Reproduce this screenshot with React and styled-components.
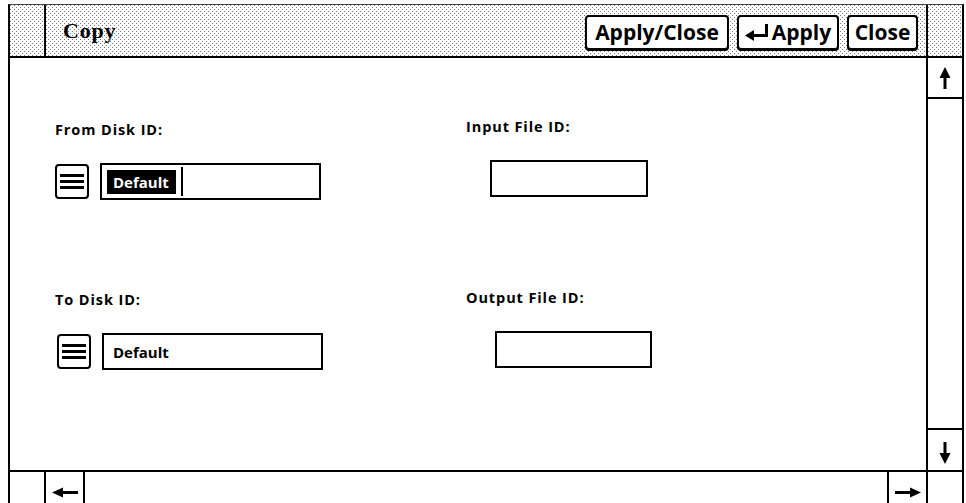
import React from 'react';
import styled, { createGlobalStyle } from 'styled-components';

const Global = createGlobalStyle`
  html, body { margin: 0; padding: 0; background: #fff; overflow: hidden; }
  body { font-family: "Open Sans", "Liberation Sans", sans-serif; color: #000; }
`;

const dots = `
  background-color: #fff;
  background-image:
    conic-gradient(from 270deg at 1px 1px, #7a7a7a 90deg, transparent 0),
    conic-gradient(from 270deg at 1px 1px, #7a7a7a 90deg, transparent 0);
  background-size: 4px 4px, 4px 4px;
  background-position: 0 0, 2px 2px;
`;

const Page = styled.div`
  width: 966px;
  height: 503px;
  padding: 4px 0 0 8px;
  box-sizing: border-box;
  overflow: hidden;
`;

const Window = styled.div`
  width: 956px;
  height: 510px;
  box-sizing: border-box;
  border-left: 2px solid #000;
  border-right: 2px solid #000;
  border-top: 1px solid #444;
  display: flex;
  flex-direction: column;
`;

const TitleBar = styled.div`
  height: 53px;
  flex-shrink: 0;
  box-sizing: border-box;
  border-bottom: 2px solid #000;
  display: flex;
  align-items: center;
  ${dots}
`;

const TitleCorner = styled.div`
  width: 36px;
  align-self: stretch;
  box-sizing: border-box;
  border-${p => p.$side}: 2px solid #000;
`;

const Title = styled.div`
  flex: 1;
  padding-left: 17px;
  margin-top: 1px;
  font-family: "Liberation Serif", "Times New Roman", serif;
  font-weight: 700;
  font-size: 22px;
  letter-spacing: 0.8px;
`;

const ButtonGroup = styled.div`
  display: flex;
  gap: 8px;
  margin: 4px 8px 0 0;
`;

const Button = styled.div`
  width: ${p => p.$w}px;
  height: 35px;
  box-sizing: border-box;
  border: 2px solid #000;
  border-radius: 4px;
  box-shadow: 0 1px 0 #000;
  background: #fff;
  display: flex;
  align-items: center;
  justify-content: center;
  gap: 3px;
  font-family: "Open Sans", "Liberation Sans", sans-serif;
  font-weight: 700;
  font-size: 21px;
  line-height: 1;
`;

const Main = styled.div`
  height: 414px;
  flex-shrink: 0;
  box-sizing: border-box;
  border-bottom: 2px solid #000;
  display: flex;
`;

const Content = styled.div`
  flex: 1;
`;

const VScroll = styled.div`
  width: 36px;
  box-sizing: border-box;
  border-left: 2px solid #000;
  display: flex;
  flex-direction: column;
  justify-content: space-between;
`;

const ScrollBox = styled.div`
  height: ${p => p.$h}px;
  box-sizing: border-box;
  border-${p => p.$edge}: 2px solid #000;
  display: flex;
  align-items: center;
  justify-content: center;
  padding-top: ${p => p.$pt || 0}px;
`;

const Bottom = styled.div`
  height: 40px;
  display: flex;
`;

const HCell = styled.div`
  width: ${p => p.$w}px;
  flex: ${p => (p.$grow ? 1 : 'none')};
  box-sizing: border-box;
  border-left: ${p => (p.$bl ? '2px solid #000' : 'none')};
  border-right: ${p => (p.$br ? '2px solid #000' : 'none')};
  display: flex;
  align-items: center;
  justify-content: center;
`;

const Form = styled.div`
  display: grid;
  grid-template-columns: 411px 1fr;
  grid-template-rows: 171px auto;
  padding: 59px 0 0 45px;
`;

const Group = styled.div`
  display: flex;
  flex-direction: column;
  align-items: flex-start;
  padding-top: ${p => p.$dy || 0}px;
`;

const Label = styled.div`
  font-family: "Open Sans", "Liberation Sans", sans-serif;
  font-weight: 700;
  font-size: 14.5px;
  letter-spacing: 0.9px;
  line-height: 19px;
`;

const FieldRow = styled.div`
  display: flex;
  align-items: center;
  gap: 11px;
  margin-top: 24px;
  margin-left: ${p => p.$dx || 0}px;
`;

const MenuButton = styled.div`
  width: 34px;
  height: 35px;
  box-sizing: border-box;
  border: 2px solid #000;
  border-radius: 4px;
  display: flex;
  flex-direction: column;
  align-items: center;
  justify-content: center;
  gap: 3px;
`;

const Bar = styled.div`
  width: 24px;
  height: 3px;
  background: #000;
`;

const TextBox = styled.div`
  width: ${p => p.$w}px;
  height: 37px;
  box-sizing: border-box;
  border: 2px solid #000;
  display: flex;
  align-items: center;
  padding-left: ${p => p.$pl || 0}px;
  font-family: "Open Sans", "Liberation Sans", sans-serif;
  font-weight: 700;
  font-size: 15px;
`;

const Selected = styled.span`
  background: #000;
  color: #fff;
  padding: 0 7px 0 6px;
  line-height: 24px;
`;

const Caret = styled.span`
  width: 2px;
  height: 29px;
  background: #000;
  margin-left: 5px;
`;

const ReturnIcon = () => (
  <svg width="24" height="17" viewBox="0 0 24 17">
    <polygon points="0,11.5 9,6 9,17" fill="#000" />
    <rect x="8" y="10" width="15" height="3" fill="#000" />
    <rect x="20" y="0" width="3" height="13" fill="#000" />
  </svg>
);

const ArrowV = ({ down }) => (
  <svg width="12" height="22" viewBox="0 0 12 22" style={down ? { transform: 'rotate(180deg)' } : undefined}>
    <polygon points="6,0 11.5,11 0.5,11" fill="#000" />
    <rect x="4.5" y="10" width="3" height="12" fill="#000" />
  </svg>
);

const ArrowH = ({ right }) => (
  <svg width="26" height="11" viewBox="0 0 26 11" style={right ? { transform: 'rotate(180deg)' } : undefined}>
    <polygon points="0,5.5 11,0.5 11,10.5" fill="#000" />
    <rect x="10" y="4" width="16" height="3" fill="#000" />
  </svg>
);

const Menu = () => (
  <MenuButton>
    <Bar />
    <Bar />
    <Bar />
  </MenuButton>
);

export default function App() {
  return (
    <>
      <Global />
      <Page>
        <Window>
          <TitleBar>
            <TitleCorner $side="right" />
            <Title>Copy</Title>
            <ButtonGroup>
              <Button $w={144}>Apply/Close</Button>
              <Button $w={102}>
                <ReturnIcon />
                Apply
              </Button>
              <Button $w={71}>Close</Button>
            </ButtonGroup>
            <TitleCorner $side="left" />
          </TitleBar>
          <Main>
            <Content>
              <Form>
                <Group $dy={3}>
                  <Label>From Disk ID:</Label>
                  <FieldRow>
                    <Menu />
                    <TextBox $w={221} $pl={5}>
                      <Selected>Default</Selected>
                      <Caret />
                    </TextBox>
                  </FieldRow>
                </Group>
                <Group>
                  <Label>Input File ID:</Label>
                  <FieldRow $dx={24}>
                    <TextBox $w={158} />
                  </FieldRow>
                </Group>
                <Group $dy={2}>
                  <Label>To Disk ID:</Label>
                  <FieldRow $dx={2}>
                    <Menu />
                    <TextBox $w={221} $pl={9}>Default</TextBox>
                  </FieldRow>
                </Group>
                <Group>
                  <Label>Output File ID:</Label>
                  <FieldRow $dx={29}>
                    <TextBox $w={157} />
                  </FieldRow>
                </Group>
              </Form>
            </Content>
            <VScroll>
              <ScrollBox $h={41} $edge="bottom">
                <ArrowV />
              </ScrollBox>
              <ScrollBox $h={42} $edge="top" $pt={6}>
                <ArrowV down />
              </ScrollBox>
            </VScroll>
          </Main>
          <Bottom>
            <HCell $w={36} $br />
            <HCell $w={39} $br>
              <ArrowH />
            </HCell>
            <HCell $grow />
            <HCell $w={39} $bl>
              <ArrowH right />
            </HCell>
            <HCell $w={36} $bl />
          </Bottom>
        </Window>
      </Page>
    </>
  );
}
